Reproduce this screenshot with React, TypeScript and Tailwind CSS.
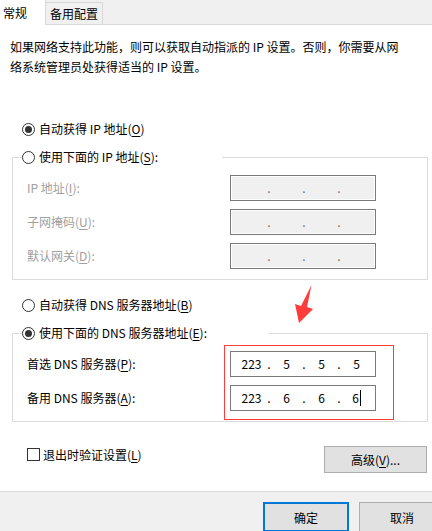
import React from "react";

function Radio({ checked }: { checked?: boolean }) {
  return (
    <span className="w-[13px] h-[13px] rounded-full border border-[#333333] bg-white flex items-center justify-center shrink-0">
      {checked && <span className="w-[7px] h-[7px] rounded-full bg-[#333333]" />}
    </span>
  );
}

function U({ children }: { children: React.ReactNode }) {
  return <span className="underline underline-offset-2">{children}</span>;
}

function IpBox({ values, disabled, cursor }: { values?: string[]; disabled?: boolean; cursor?: boolean }) {
  const v = values ?? ["", "", "", ""];
  return (
    <div
      className={
        disabled
          ? "w-[146px] h-[26px] border border-[#7a7a7a] bg-[#f0f0f0] shadow-[inset_0_0_0_1px_#ffffff] flex items-center pl-[5px]"
          : "w-[146px] h-[26px] border border-[#7a7a7a] bg-white flex items-center pl-[5px]"
      }
    >
      {v.map((o, i) => (
        <React.Fragment key={i}>
          <span className="w-[31px] text-center flex items-center justify-center text-black">
            {o}
            {cursor && i === 3 && <span className="inline-block w-px h-[16px] bg-black ml-[1px]" />}
          </span>
          {i < 3 && (
            <span className={disabled ? "w-[4px] text-center text-[#707070]" : "w-[4px] text-center text-black"}>.</span>
          )}
        </React.Fragment>
      ))}
    </div>
  );
}

export default function App() {
  return (
    <div className="w-[432px] h-[531px] bg-white flex flex-col overflow-hidden relative font-['Noto_Sans_CJK_SC',sans-serif] text-[12px] leading-[20px] text-black">
      {/* Tabs */}
      <div className="h-[25px] shrink-0 bg-[#f0f0f0] border-b border-[#d9d9d9] flex items-end">
        <div className="w-[46px] h-[25px] -mb-px bg-white border-r border-[#d9d9d9] pl-[3px] flex items-center">常规</div>
        <div className="w-[57px] h-[22px] bg-[#f0f0f0] border-r border-t border-[#d9d9d9] pl-[4px] flex items-center">备用配置</div>
      </div>

      {/* Description */}
      <p className="mt-[12px] ml-[10px]">
        如果网络支持此功能，则可以获取自动指派的 IP 设置。否则，你需要从网
        <br />
        络系统管理员处获得适当的 IP 设置。
      </p>

      {/* Radio 1 */}
      <div className="mt-[42px] pl-[22px] h-[20px] flex items-center gap-[4px]">
        <Radio checked />
        <span>
          自动获得 IP 地址(<U>O</U>)
        </span>
      </div>

      {/* IP group */}
      <fieldset className="mt-[8px] ml-[12px] w-[416px] border border-[#dcdcdc] pb-[10px]">
        <legend className="ml-[9px] w-[200px] p-0">
          <div className="h-[20px] flex items-center gap-[4px]">
            <Radio />
            <span>
              使用下面的 IP 地址(<U>S</U>):
            </span>
          </div>
        </legend>
        <div className="pt-[8px] pl-[14px] flex flex-col gap-[8px] text-[#a0a0a0]">
          <div className="flex items-center">
            <span className="w-[203px]">
              IP 地址(<U>I</U>):
            </span>
            <IpBox disabled />
          </div>
          <div className="flex items-center">
            <span className="w-[203px]">
              子网掩码(<U>U</U>):
            </span>
            <IpBox disabled />
          </div>
          <div className="flex items-center">
            <span className="w-[203px]">
              默认网关(<U>D</U>):
            </span>
            <IpBox disabled />
          </div>
        </div>
      </fieldset>

      {/* Radio 3 */}
      <div className="mt-[15px] pl-[22px] h-[20px] flex items-center gap-[4px]">
        <Radio />
        <span>
          自动获得 DNS 服务器地址(<U>B</U>)
        </span>
      </div>

      {/* DNS group */}
      <fieldset className="mt-[8px] ml-[12px] w-[416px] border border-[#dcdcdc] pb-[10px]">
        <legend className="ml-[9px] w-[247px] p-0">
          <div className="h-[20px] flex items-center gap-[4px]">
            <Radio checked />
            <span>
              使用下面的 DNS 服务器地址(<U>E</U>):
            </span>
          </div>
        </legend>
        <div className="pt-[8px] pl-[14px] flex flex-col gap-[8px]">
          <div className="flex items-center">
            <span className="w-[203px]">
              首选 DNS 服务器(<U>P</U>):
            </span>
            <IpBox values={["223", "5", "5", "5"]} />
          </div>
          <div className="flex items-center">
            <span className="w-[203px]">
              备用 DNS 服务器(<U>A</U>):
            </span>
            <IpBox values={["223", "6", "6", "6"]} cursor />
          </div>
        </div>
      </fieldset>

      {/* Checkbox + advanced */}
      <div className="mt-[24px] flex items-start">
        <div className="ml-[27px] mt-[2px] flex items-center gap-[3px] h-[13px]">
          <span className="w-[13px] h-[13px] border border-[#333333] bg-white shrink-0" />
          <span>
            退出时验证设置(<U>L</U>)
          </span>
        </div>
        <button className="ml-auto mr-[5px] w-[103px] h-[27px] border border-[#adadad] bg-[#e1e1e1] flex items-center justify-center">
          高级(<U>V</U>)...
        </button>
      </div>

      {/* Footer */}
      <div className="mt-auto h-[40px] shrink-0 border-t border-[#dadada] bg-[#f0f0f0] flex items-start pt-[10px] pl-[263px] gap-[10px]">
        <button className="w-[86px] h-[30px] shrink-0 border-2 border-[#0078d7] bg-[#e1e1e1] flex items-start justify-center pt-[4px]">
          确定
        </button>
        <button className="w-[86px] h-[30px] shrink-0 border border-[#adadad] bg-[#e1e1e1] flex items-start justify-center pt-[5px]">
          取消
        </button>
      </div>

      {/* Annotations */}
      <div className="absolute left-[224px] top-[345px] w-[170px] h-[75px] border border-[#ff3b3b]" />
      <svg className="absolute left-[290px] top-[280px]" width="30" height="48" viewBox="0 0 30 48">
        <polygon points="21.5,5 17,27 23,29 9,43 5,24 11,26" fill="#ff3c3c" />
      </svg>
    </div>
  );
}
